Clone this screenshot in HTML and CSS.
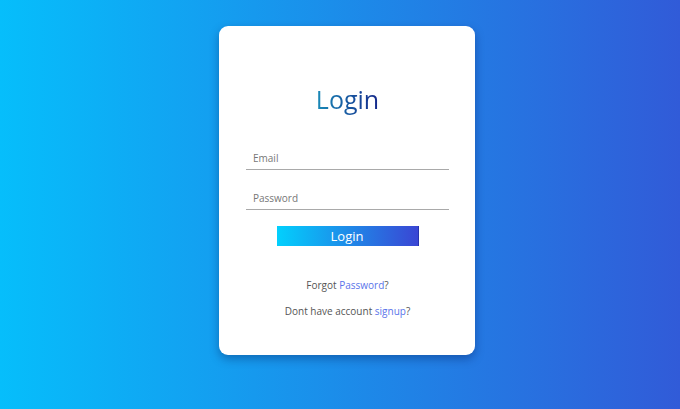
FILE: index.html
```html
<!DOCTYPE html>
<html>
<head>
<meta charset="utf-8">
<link rel="stylesheet" href="styles.css">
</head>
<body>
<div class="page">
  <div class="card">
    <h1 class="title"><span class="title-text">Login</span></h1>
    <div class="field"><input class="input" type="text" placeholder="Email"></div>
    <div class="field second"><input class="input" type="password" placeholder="Password"></div>
    <div class="btn-row"><button class="btn">Login</button></div>
    <p class="note first">Forgot <a class="link" href="#">Password</a><span class="q">?</span></p>
    <p class="note">Dont have account <a class="link" href="#">signup</a><span class="q">?</span></p>
  </div>
</div>
</body>
</html>
```
FILE: styles.css
```css
html, body {
  margin: 0;
  padding: 0;
  height: 100%;
}
body {
  background: linear-gradient(to right, #06befb, #315bd8);
  font-family: "Open Sans", "Noto Sans", sans-serif;
}
.page {
  display: flex;
  justify-content: center;
  padding-top: 26px;
  padding-left: 14px;
}
.card {
  width: 256px;
  box-sizing: border-box;
  background: #fff;
  border-radius: 9px;
  box-shadow: 0 4px 10px rgba(0, 20, 80, 0.35);
  padding: 56px 26px 36px 27px;
  display: flex;
  flex-direction: column;
}
.title {
  margin: 0;
  text-align: center;
  font-size: 25px;
  line-height: 34px;
  font-weight: 400;
}
.title-text {
  display: inline-block;
  background: linear-gradient(to right, #1a8bb8, #14278a);
  -webkit-background-clip: text;
  background-clip: text;
  color: transparent;
}
.field {
  margin-top: 34px;
}
.field.second {
  margin-top: 20px;
}
.input {
  display: block;
  width: 100%;
  box-sizing: border-box;
  height: 20px;
  border: none;
  border-bottom: 1px solid #a9a9a9;
  padding: 0 7px 3px;
  font-family: "Open Sans", "Noto Sans", sans-serif;
  font-size: 10px;
  color: #333;
  outline: none;
  background: transparent;
}
.input::placeholder {
  color: #777;
}
.btn-row {
  display: flex;
  justify-content: center;
  margin-top: 16px;
}
.btn {
  width: 142px;
  height: 20px;
  border: none;
  border-right: 1px solid #2634b0;
  background: linear-gradient(to right, #02d0fd, #3a46d4);
  color: #fff;
  font-family: "Open Sans", "Noto Sans", sans-serif;
  font-size: 13px;
  line-height: 20px;
  padding: 0;
}
.note {
  margin: 10px 0 0;
  text-align: center;
  font-size: 10px;
  line-height: 16px;
  color: #555;
}
.note.first {
  margin-top: 31px;
}
.link {
  color: #5a74ea;
  text-decoration: none;
}
.q {
  color: #555;
}
```
